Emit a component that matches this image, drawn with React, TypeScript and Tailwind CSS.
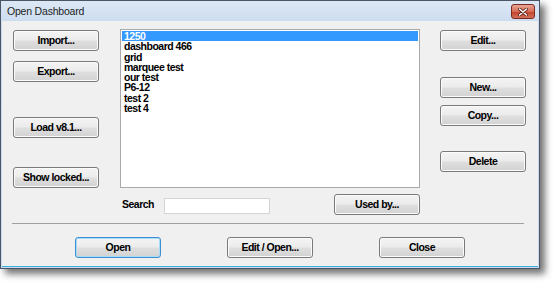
const DASHBOARDS = ["1250", "dashboard 466", "grid", "marquee test", "our test", "P6-12", "test 2", "test 4"];

function WinButton({ label, className = "", focused = false }: { label: string; className?: string; focused?: boolean }) {
  return (
    <div
      className={`flex h-[21px] w-[86px] shrink-0 items-center justify-center rounded-[3px] border bg-[linear-gradient(#f4f4f4,#ececec_45%,#dedede_55%,#d2d2d2)] text-[10.5px] font-bold tracking-[-0.5px] text-black ${
        focused
          ? "border-[#3c8fd0] shadow-[inset_0_0_0_1px_#a9dcf6]"
          : "border-[#7a7a7a] shadow-[inset_0_0_0_1px_#fbfbfb]"
      } ${className}`}
    >
      {label}
    </div>
  );
}

function CloseButton() {
  return (
    <div className="flex h-[15px] w-[24px] items-center justify-center rounded-[3px] border border-[#7a2a20] bg-[linear-gradient(#e9a797,#d66b55_50%,#c4452d_55%,#d2705a)]">
      <svg width="10" height="8" viewBox="0 0 10 8">
        <path d="M1.5 1 L8.5 7 M8.5 1 L1.5 7" stroke="#5a1a10" strokeWidth="3" strokeLinecap="round" />
        <path d="M1.5 1 L8.5 7 M8.5 1 L1.5 7" stroke="#ffffff" strokeWidth="1.6" strokeLinecap="round" />
      </svg>
    </div>
  );
}

export default function App() {
  return (
    <div className="h-[285px] w-[555px] overflow-hidden bg-white font-['Liberation_Sans',Arial,sans-serif]">
      <div className="flex h-[269px] w-[540px] flex-col border border-[#4a5566] bg-[linear-gradient(#dce7f4,#c6d8ee_30px,#c9daee)] px-[1px] pb-[1px] shadow-[5px_5px_7px_rgba(0,0,0,0.55)]">
        {/* title bar */}
        <div className="flex h-[20px] shrink-0 items-center justify-between pl-[5px] pr-[3px] pt-[1px]">
          <span className="text-[10.5px] tracking-[-0.2px] text-[#1e1e1e]">Open Dashboard</span>
          <CloseButton />
        </div>

        {/* client area */}
        <div className="flex flex-1 flex-col border-b border-[#3cb3da] bg-[#f0f0f0]">
          <div className="flex items-start pl-[11px] pt-[8px]">
            <div className="flex flex-col pt-[1px]">
              <WinButton label="Import..." />
              <WinButton label="Export..." className="mt-[10px]" />
              <WinButton label="Load v8.1..." className="mt-[35px]" />
              <WinButton label="Show locked..." className="mt-[29px]" />
            </div>

            <div className="ml-[21px] flex w-[300px] flex-col">
              <div className="h-[159px] border border-[#a7a9ad] bg-white pl-[1px] pr-[1px] pt-[1px]">
                {DASHBOARDS.map((name, i) => (
                  <div
                    key={name}
                    className={`h-[10.3px] pl-[2px] text-[10.5px] font-bold leading-[10.3px] tracking-[-0.5px] ${
                      i === 0 ? "bg-[#3399ff] text-white" : "text-black"
                    }`}
                  >
                    {name}
                  </div>
                ))}
              </div>
              <div className="mt-[6px] flex items-center">
                <span className="pl-[2px] text-[10.5px] font-bold tracking-[-0.5px] text-black">Search</span>
                <div className="ml-[10px] mt-[3px] h-[16px] w-[106px] border border-[#d4d4d4] bg-white" />
                <WinButton label="Used by..." className="ml-auto" />
              </div>
            </div>

            <div className="ml-[20px] flex flex-col pt-[1px]">
              <WinButton label="Edit..." />
              <WinButton label="New..." className="mt-[26px]" />
              <WinButton label="Copy..." className="mt-[7px]" />
              <WinButton label="Delete" className="mt-[25px]" />
            </div>
          </div>

          <div className="ml-[10px] mt-[8px] h-[2px] w-[512px] border-t border-[#a0a0a0] border-b-white" />

          <div className="mt-[12px] flex gap-[66px] pl-[73px]">
            <WinButton label="Open" focused />
            <WinButton label="Edit / Open..." />
            <WinButton label="Close" />
          </div>
        </div>
      </div>
    </div>
  );
}
